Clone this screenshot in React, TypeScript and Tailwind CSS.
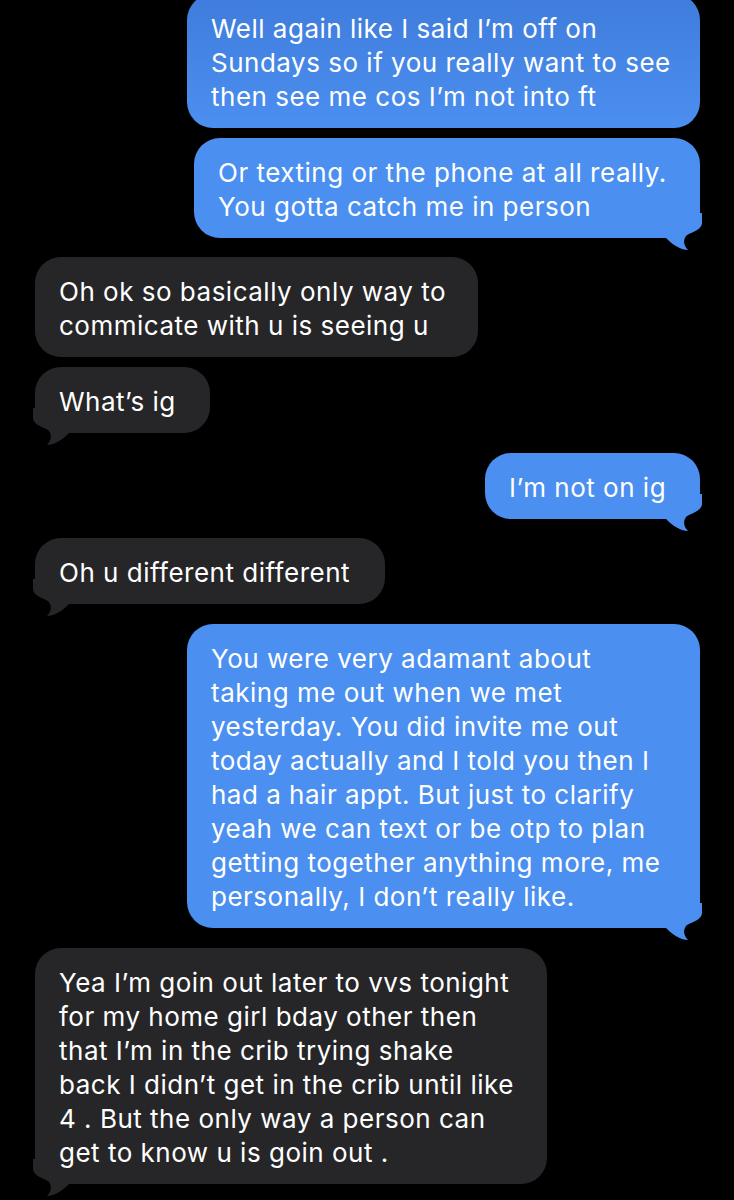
import React from "react";

type Msg = {
  out: boolean;
  lines: string[];
  w: string;
  mt: string;
  tail: boolean;
  bg?: string;
};

const msgs: Msg[] = [
  {
    out: true,
    lines: [
      "Well again like I said I’m off on",
      "Sundays so if you really want to see",
      "then see me cos I’m not into ft",
    ],
    w: "w-[513px]",
    mt: "-mt-[6px]",
    tail: false,
    bg: "bg-gradient-to-b from-[#3f7cdb] to-[#4b8ff0]",
  },
  {
    out: true,
    lines: ["Or texting or the phone at all really.", "You gotta catch me in person"],
    w: "w-[506px]",
    mt: "mt-[10px]",
    tail: true,
  },
  {
    out: false,
    lines: ["Oh ok so basically only way to", "commicate with u is seeing u"],
    w: "w-[443px]",
    mt: "mt-[19px]",
    tail: false,
  },
  {
    out: false,
    lines: ["What’s ig"],
    w: "w-[175px]",
    mt: "mt-[10px]",
    tail: true,
  },
  {
    out: true,
    lines: ["I’m not on ig"],
    w: "w-[215px]",
    mt: "mt-[20px]",
    tail: true,
  },
  {
    out: false,
    lines: ["Oh u different different"],
    w: "w-[350px]",
    mt: "mt-[19px]",
    tail: true,
  },
  {
    out: true,
    lines: [
      "You were very adamant about",
      "taking me out when we met",
      "yesterday. You did invite me out",
      "today actually and I told you then I",
      "had a hair appt. But just to clarify",
      "yeah we can text or be otp to plan",
      "getting together anything more, me",
      "personally, I don’t really like.",
    ],
    w: "w-[513px]",
    mt: "mt-[20px]",
    tail: true,
  },
  {
    out: false,
    lines: [
      "Yea I’m goin out later to vvs tonight",
      "for my home girl bday other then",
      "that I’m in the crib trying shake",
      "back I didn’t get in the crib until like",
      "4 . But the only way a person can",
      "get to know u is goin out .",
    ],
    w: "w-[512px]",
    mt: "mt-[20px]",
    tail: true,
  },
];

function Tail({ out }: { out: boolean }) {
  const fill = out ? "#4b8ff0" : "#262628";
  return (
    <svg
      width="42"
      height="38"
      viewBox="0 0 42 38"
      className={
        out
          ? "absolute right-[-2px] bottom-[-13px]"
          : "absolute left-[-2px] bottom-[-13px] -scale-x-100"
      }
    >
      <path
        d="M0 0 L42 0 L42 10 C42 16 33 19 27 22 C23 26 23 32 28 37 C20 37 12 31 6 25 L0 25 Z"
        fill={fill}
      />
    </svg>
  );
}

function Bubble({ m }: { m: Msg }) {
  const bg = m.bg ? m.bg : m.out ? "bg-[#4b8ff0]" : "bg-[#262628]";
  return (
    <div
      className={
        (m.out ? "flex justify-end pr-[34px] " : "flex justify-start pl-[35px] ") + m.mt
      }
    >
      <div className={"relative " + m.w}>
        {m.tail && <Tail out={m.out} />}
        <div
          className={
            "relative rounded-[26px] pl-[24px] pt-[18px] pb-[14px] text-[26px] leading-[34px] text-white whitespace-nowrap tracking-[0.5px] " +
            bg
          }
        >
          {m.lines.map((l, i) => (
            <div key={i}>{l}</div>
          ))}
        </div>
      </div>
    </div>
  );
}

export default function App() {
  return (
    <div
      className="w-[734px] h-[1200px] bg-black overflow-hidden flex flex-col"
      style={{ fontFamily: "Inter, 'Noto Sans', sans-serif" }}
    >
      {msgs.map((m, i) => (
        <Bubble key={i} m={m} />
      ))}
    </div>
  );
}
